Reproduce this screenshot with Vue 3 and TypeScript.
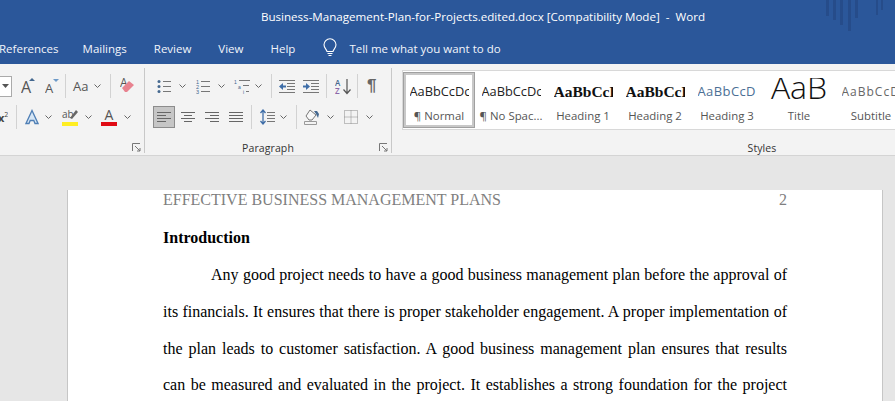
<script setup lang="ts">
const styles = [
  { s: 'AaBbCcDc', l: '¶ Normal', c: 'st-n', active: true },
  { s: 'AaBbCcDc', l: '¶ No Spac...', c: 'st-n' },
  { s: 'AaBbCcD', l: 'Heading 1', c: 'st-h' },
  { s: 'AaBbCcD', l: 'Heading 2', c: 'st-h' },
  { s: 'AaBbCcD', l: 'Heading 3', c: 'st-h3' },
  { s: 'AaB', l: 'Title', c: 'st-t' },
  { s: 'AaBbCcD', l: 'Subtitle', c: 'st-sub' },
]
const tabs = ['References', 'Mailings', 'Review', 'View', 'Help']
const lines = [
  'Any good project needs to have a good business management plan before the approval of',
  'its financials. It ensures that there is proper stakeholder engagement. A proper implementation of',
  'the plan leads to customer satisfaction. A good business management plan ensures that results',
  'can be measured and evaluated in the project. It establishes a strong foundation for the project',
]
</script>

<template>
  <div class="app">
    <header class="title">
      <span>Business-Management-Plan-for-Projects.edited.docx [Compatibility Mode]&nbsp; -&nbsp; Word</span>
    </header>
    <nav class="tabs">
      <span v-for="t in tabs" :key="t" class="tab">{{ t }}</span>
      <svg class="bulb" width="16" height="20" viewBox="0 0 16 20" fill="none" stroke="#fff" stroke-width="1.1"><path d="M5 13.5C4.5 11 2 10 2 6.8a6 6 0 0 1 12 0C14 10 11.5 11 11 13.5Z"/><path d="M5.5 15.5h5M6.5 17.5h3"/></svg>
      <span class="tell">Tell me what you want to do</span>
    </nav>
    <section class="ribbon">
      <div class="group font">
        <div class="row">
          <span class="combo"><svg width="7" height="4" viewBox="0 0 7 4"><path d="M0 0h7L3.5 4Z" fill="#555"/></svg></span>
          <svg class="ml9" width="15" height="18" viewBox="0 0 15 18"><text x="0" y="16" class="glyph big">A</text><path d="M8 4l3-3 3 3Z" fill="#44688f"/></svg>
          <svg class="ml9" width="14" height="18" viewBox="0 0 14 18"><text x="0" y="16" class="glyph mid">A</text><path d="M8 2h6l-3 3Z" fill="#6d9ac8"/></svg>
          <i class="sep ml6"></i>
          <span class="aa ml7">Aa</span>
          <svg class="chev ml5" width="7" height="4" viewBox="0 0 7 4"><path d="M.5.5l3 3 3-3"/></svg>
          <i class="sep ml9"></i>
          <svg class="ml9" width="15" height="18" viewBox="0 0 15 18"><text x="0" y="10" class="glyph small">A</text><path d="M2 11l7-7 5 4-7 7H5Z" fill="#e8828f"/></svg>
        </div>
        <div class="row second">
          <span class="sup">x<sup>2</sup></span>
          <i class="sep ml8"></i>
          <svg class="ml8" width="14" height="16" viewBox="0 0 14 16"><path d="M7 1.500 1 14.500h3l1.200-3h3.600l1.200 3h3Z" fill="#d6e6f5" stroke="#4f7fb5" stroke-width="1.300"/></svg>
          <svg class="chev ml6" width="7" height="4" viewBox="0 0 7 4"><path d="M.5.5l3 3 3-3"/></svg>
          <span class="hl ml10"><b>ab</b><svg width="10" height="11" viewBox="0 0 10 11"><path d="M1 9l6-8 2 2-6 7Z" fill="#666"/></svg><i></i></span>
          <svg class="chev ml7" width="7" height="4" viewBox="0 0 7 4"><path d="M.5.5l3 3 3-3"/></svg>
          <span class="fc ml9">A<i></i></span>
          <svg class="chev ml7" width="7" height="4" viewBox="0 0 7 4"><path d="M.5.5l3 3 3-3"/></svg>
        </div>
        <svg class="launch" width="9" height="9" viewBox="0 0 9 9" fill="none" stroke="#777"><path d="M.5 8V.5H8M3 3l5 5M8 5v3H5"/></svg>
      </div>

      <div class="group para">
        <div class="row prow1">
          <svg width="15" height="15" viewBox="0 0 15 15"><g fill="#44688f"><circle cx="2" cy="2.500" r="1.500"/><circle cx="2" cy="7.500" r="1.500"/><circle cx="2" cy="12.500" r="1.500"/></g><path d="M6 2.500h8M6 7.500h8M6 12.500h8" stroke="#777"/></svg>
          <svg class="chev ml7" width="7" height="4" viewBox="0 0 7 4"><path d="M.5.5l3 3 3-3"/></svg>
          <svg class="ml10" width="15" height="15" viewBox="0 0 15 15"><g fill="#44688f" font-size="5.500" font-family="Liberation Sans"><text x="0" y="5">1</text><text x="0" y="10">2</text><text x="0" y="15">3</text></g><path d="M5 2.500h9M5 7.500h9M5 12.500h9" stroke="#777"/></svg>
          <svg class="chev ml7" width="7" height="4" viewBox="0 0 7 4"><path d="M.5.5l3 3 3-3"/></svg>
          <svg class="ml9" width="17" height="15" viewBox="0 0 17 15"><g fill="#44688f" font-size="5" font-family="Liberation Sans"><text x="0" y="5">1</text><text x="4" y="10">a</text><text x="9" y="15">i</text></g><path d="M5 1.500h11M9 6.500h6M12 12.500h3" stroke="#777"/></svg>
          <svg class="chev ml4" width="7" height="4" viewBox="0 0 7 4"><path d="M.5.5l3 3 3-3"/></svg>
          <i class="sep ml9"></i>
          <svg class="ml7" width="16" height="13" viewBox="0 0 16 13"><path d="M3 6.500h4" stroke="#3f6ea8" stroke-width="2"/><path d="M4 3v7L0 6.500Z" fill="#3f6ea8"/><path d="M0 .5h16M8 3.500h8M8 6.500h8M8 9.500h8M0 12.500h16" stroke="#777"/></svg>
          <svg class="ml8" width="16" height="13" viewBox="0 0 16 13"><path d="M0 6.500h4" stroke="#3f6ea8" stroke-width="2"/><path d="M3 3v7l4-3.500Z" fill="#3f6ea8"/><path d="M0 .5h16M8 3.500h8M8 6.500h8M8 9.500h8M0 12.500h16" stroke="#777"/></svg>
          <i class="sep ml7"></i>
          <svg class="ml8" width="17" height="17" viewBox="0 0 17 17"><text x="0" y="8" class="az a">A</text><text x="0" y="16" class="az z">Z</text><path d="M12 1v14M8.500 11.500 12 15.500l3.500-4" stroke="#555" fill="none" stroke-width="1.200"/></svg>
          <i class="sep ml5"></i>
          <span class="pil ml9">¶</span>
        </div>
        <div class="row second prow2">
          <span class="al active"><svg width="14" height="11" viewBox="0 0 14 11"><path d="M0 .5h14M0 3.500h9M0 6.500h14M0 9.500h9" stroke="#666"/></svg></span>
          <span class="al"><svg width="14" height="11" viewBox="0 0 14 11"><path d="M0 .5h14M3 3.500h8M0 6.500h14M3 9.500h8" stroke="#666"/></svg></span>
          <span class="al"><svg width="14" height="11" viewBox="0 0 14 11"><path d="M0 .5h14M5 3.500h9M0 6.500h14M5 9.500h9" stroke="#666"/></svg></span>
          <span class="al"><svg width="14" height="11" viewBox="0 0 14 11"><path d="M0 .5h14M0 3.500h14M0 6.500h14M0 9.500h14" stroke="#666"/></svg></span>
          <i class="sep ml2"></i>
          <svg class="ml8" width="15" height="16" viewBox="0 0 15 16"><path d="M3 1v14M.5 4 3 1l2.500 3M.5 12 3 15l2.500-3" stroke="#3f6ea8" fill="none" stroke-width="1.300"/><path d="M7 3.500h8M7 6.500h8M7 9.500h8M7 12.500h8" stroke="#777"/></svg>
          <svg class="chev ml5" width="7" height="4" viewBox="0 0 7 4"><path d="M.5.5l3 3 3-3"/></svg>
          <i class="sep ml9"></i>
          <svg class="ml7" width="16" height="16" viewBox="0 0 16 16"><path d="M2 7l4-6 6 5-4 5H5Z" fill="#f8f8f8" stroke="#777"/><path d="M10 2h3l2 3-1 4-2-4Z" fill="#44688f"/><path d="M.5 12.500h12v3H.5Z" fill="none" stroke="#999"/></svg>
          <svg class="chev ml7" width="7" height="4" viewBox="0 0 7 4"><path d="M.5.5l3 3 3-3"/></svg>
          <svg class="ml10" width="14" height="14" viewBox="0 0 14 14"><path d="M.5.5h13v13H.5ZM7 .5v13M.5 7h13" fill="none" stroke="#888" stroke-dasharray="1 1"/></svg>
          <svg class="chev ml8" width="7" height="4" viewBox="0 0 7 4"><path d="M.5.5l3 3 3-3"/></svg>
        </div>
        <span class="glabel">Paragraph</span>
        <svg class="launch" width="9" height="9" viewBox="0 0 9 9" fill="none" stroke="#777"><path d="M.5 8V.5H8M3 3l5 5M8 5v3H5"/></svg>
      </div>

      <div class="group stylesg">
        <div class="gallery">
          <div v-for="(st, i) in styles" :key="i" class="style" :class="{ active: st.active }">
            <span class="sample" :class="st.c">{{ st.s }}</span>
            <span class="lab">{{ st.l }}</span>
          </div>
        </div>
        <span class="glabel">Styles</span>
      </div>
    </section>
    <main class="doc">
      <article class="page">
        <div class="hdr"><span>EFFECTIVE BUSINESS MANAGEMENT PLANS</span><span>2</span></div>
        <h1>Introduction</h1>
        <p v-for="(l, i) in lines" :key="i" class="line" :class="{ indent: i === 0 }">{{ l }}</p>
      </article>
    </main>
    <svg class="deco" width="60" height="32" viewBox="0 0 60 32"><g fill="#264c8a"><rect x="0" y="0" width="3" height="16"/><rect x="7" y="0" width="3" height="20"/><rect x="14" y="0" width="3" height="25"/><rect x="22" y="0" width="3" height="31"/><rect x="29" y="0" width="3" height="18"/><rect x="50" y="0" width="2" height="15"/><rect x="55" y="0" width="2" height="10"/></g></svg>
  </div>
</template>

<style>
html, body { margin: 0; overflow: hidden; }
</style>

<style scoped>
.app { position: relative; width: 895px; height: 401px; overflow: hidden; background: #e6e6e6; font-family: "Open Sans", "Noto Sans", sans-serif; color: #444; }
.title { height: 32px; background: #2b579a; color: #fff; font-size: 11.6px; display: flex; align-items: center; justify-content: center; padding-left: 71px; box-sizing: border-box; white-space: nowrap; }
.tabs { height: 32px; background: #2b579a; color: #f2f5fa; font-size: 11.5px; display: flex; align-items: center; white-space: nowrap; }
.tab { margin-right: 27px; }
.tab:first-child { margin-left: -1px; margin-right: 24px; }
.bulb { margin-right: 11px; }
.ribbon { height: 92px; box-sizing: border-box; background: #f3f3f3; border-bottom: 1px solid #d4d4d4; display: flex; align-items: flex-start; overflow: hidden; }
.group { position: relative; margin-top: 4px; height: 85px; box-sizing: border-box; padding-top: 6px; border-right: 1px solid #c8c8c8; flex: none; display: flex; flex-direction: column; }
.font { width: 145px; }
.para { width: 247px; }
.row { display: flex; align-items: center; height: 24px; white-space: nowrap; flex: none; }
.second { margin-top: 7px; }
.prow1 { margin-left: 12px; }
.prow2 { margin-left: 8px; }
.ml2 { margin-left: 2px; }
.ml4 { margin-left: 4px; }
.ml5 { margin-left: 5px; }
.ml6 { margin-left: 6px; }
.ml7 { margin-left: 7px; }
.ml8 { margin-left: 8px; }
.ml9 { margin-left: 9px; }
.ml10 { margin-left: 10px; }
.combo { width: 12px; height: 21px; box-sizing: border-box; border: 1px solid #aaa; border-left: 0; background: #fff; display: flex; align-items: center; justify-content: center; flex: none; }
.sep { width: 1px; height: 24px; background: #d2d2d2; flex: none; }
.aa { width: 16px; font-size: 13px; color: #555; flex: none; }
.chev { fill: none; stroke: #666; flex: none; }
svg { flex: none; }
.glyph { fill: #555; font-family: "Open Sans", sans-serif; }
.big { font-size: 16px; }
.mid { font-size: 13px; }
.small { font-size: 12px; }
.sup { width: 10px; overflow: hidden; font-weight: 700; font-size: 11px; margin-left: -2px; flex: none; }
.sup sup { font-size: 7px; font-weight: 400; line-height: 0; }
.hl { position: relative; width: 16px; height: 17px; display: block; font-size: 10px; line-height: 12px; color: #555; flex: none; }
.hl b { font-weight: 400; position: absolute; left: 0; top: -1px; }
.hl svg { position: absolute; right: -1px; top: 0; }
.hl i { position: absolute; left: 0; right: 0; bottom: 0; height: 4px; background: #ffee22; }
.fc { position: relative; width: 16px; height: 18px; display: block; font-size: 14px; line-height: 14px; text-align: center; color: #555; flex: none; }
.fc i { position: absolute; left: 0; right: 0; bottom: 0; height: 4px; background: #e00b14; }
.launch { position: absolute; right: 3px; bottom: 1px; }
.al { width: 22px; height: 22px; box-sizing: border-box; display: flex; align-items: center; justify-content: center; margin-right: 2px; flex: none; }
.al.active { background: #c6c6c6; border: 1px solid #8c8c8c; }
.az { font-size: 8px; font-family: "Open Sans", sans-serif; font-weight: 600; }
.a { fill: #44688f; }
.z { fill: #8a67a8; }
.pil { font-size: 17px; font-family: "Liberation Sans", sans-serif; font-weight: 700; color: #666; }
.glabel { margin-top: auto; margin-bottom: -2px; height: 14px; line-height: 14px; text-align: center; font-size: 10.5px; letter-spacing: .1px; color: #333; }
.stylesg { width: 740px; border: 0; padding-top: 2px; }
.gallery { margin-left: 10px; height: 60px; box-sizing: border-box; background: #fff; border: 1px solid #d8d8d8; border-right: 0; display: flex; flex: none; overflow: hidden; }
.style { width: 72px; flex: none; position: relative; box-sizing: border-box; padding-top: 7px; display: flex; flex-direction: column; align-items: center; overflow: hidden; }
.style.active::after { content: ""; position: absolute; left: 0; right: 0; top: 1px; bottom: 1px; border: 3px solid #c8c8c8; outline: 1px solid #a0a0a0; outline-offset: -1px; }
.sample { height: 27px; width: 59px; overflow: hidden; display: block; white-space: nowrap; line-height: 27px; color: #222; flex: none; }
.st-n { font-size: 12.8px; }
.st-h { font-family: "Liberation Serif", serif; font-weight: 700; font-size: 15.5px; color: #111; }
.st-h3 { color: #4c6f95; font-size: 13px; letter-spacing: .4px; }
.st-t { font-size: 32px; font-weight: 300; line-height: 17px; color: #111; text-align: center; }
.st-sub { color: #666; letter-spacing: 1px; font-size: 12px; }
.lab { font-size: 11.4px; color: #555; white-space: nowrap; line-height: 16px; margin-top: 3px; }
.doc { height: 245px; box-sizing: border-box; padding: 34px 0 0 67px; }
.page { width: 816px; height: 240px; background: #fff; box-sizing: border-box; padding: 0 95px; border-left: 1px solid #c6c6c6; border-right: 1px solid #c6c6c6; font-family: "Liberation Serif", serif; color: #000; font-size: 16px; }
.hdr { display: flex; justify-content: space-between; color: #7f7f7f; line-height: 20px; }
h1 { font-size: 16px; font-weight: 700; margin: 18px 0 0; line-height: 20px; }
.line { margin: 0; height: 36.67px; line-height: 36.67px; text-align: justify; text-align-last: justify; white-space: nowrap; }
h1 + .line { margin-top: 9.2px; }
.indent { padding-left: 48px; }
.deco { position: absolute; left: 826px; top: 0; }
</style>
